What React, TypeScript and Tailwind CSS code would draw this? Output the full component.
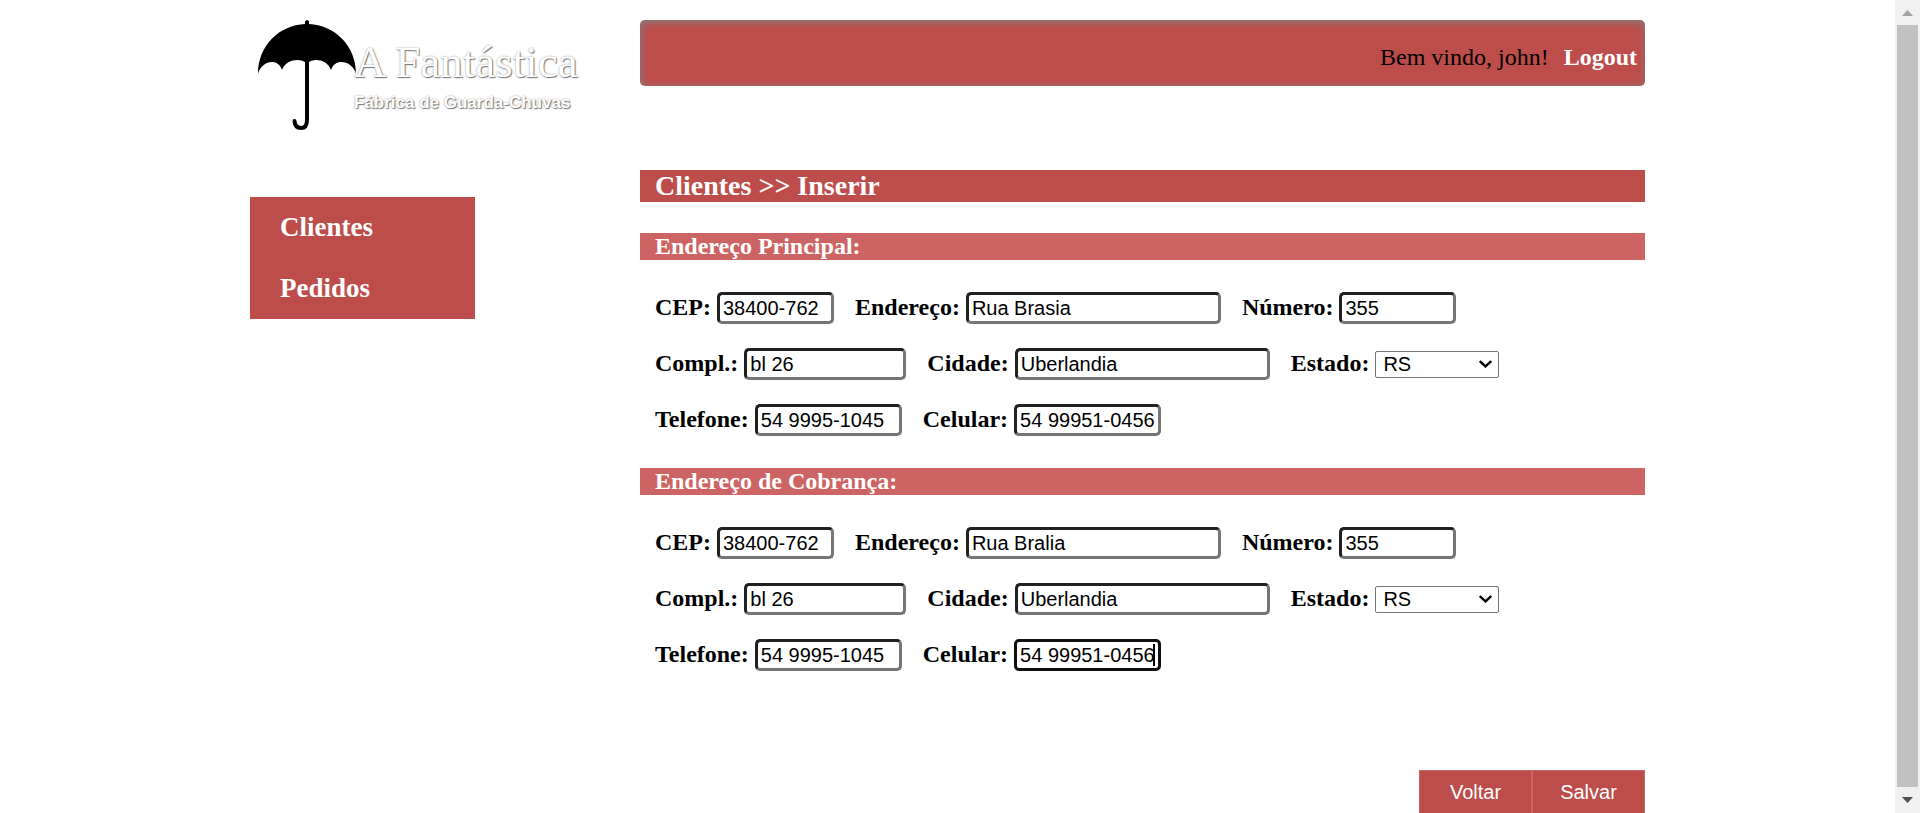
import { useId } from "react";

const control =
  "h-8 rounded-[5px] border-[3px] border-t-[#212121] border-l-[#212121] border-r-[#767676] border-b-[#767676] bg-white px-[3px] font-['Liberation_Sans',Arial,sans-serif] text-[20px] font-normal text-black outline-none";

type FieldProps = { label: string; value: string; width: string; active?: boolean };

function Field({ label, value, width, active }: FieldProps) {
  const id = useId();
  return (
    <div className="flex items-center gap-[6px]">
      <label htmlFor={id} className="leading-[30px] pb-[2px]">
        {label}
      </label>
      <span className="relative flex">
        <input
          id={id}
          type="text"
          defaultValue={value}
          className={`${control} ${width} ${active ? "border-[#101010]!" : ""}`}
        />
        {active && <span className="absolute top-[5px] right-[6px] h-[22px] w-[2px] bg-black" />}
      </span>
    </div>
  );
}

function StateField() {
  const id = useId();
  return (
    <div className="flex items-center gap-[6px]">
      <label htmlFor={id} className="leading-[30px] pb-[2px]">
        Estado:
      </label>
      <span className="relative flex items-center">
        <select
          id={id}
          defaultValue="RS"
          className="h-[27px] w-[124px] appearance-none rounded-[2px] border border-[#767676] bg-white pl-[7px] font-['Liberation_Sans',Arial,sans-serif] text-[20px] leading-[25px] font-normal text-black"
        >
          <option>RS</option>
          <option>MG</option>
          <option>SP</option>
        </select>
        <svg
          className="pointer-events-none absolute right-[7px] h-[8px] w-[13px]"
          viewBox="0 0 13 8"
          fill="none"
          stroke="#000"
          strokeWidth="2.4"
        >
          <path d="M0.8 1 L6.5 6.4 L12.2 1" />
        </svg>
      </span>
    </div>
  );
}

function Address({ title, street, active }: { title: string; street: string; active?: boolean }) {
  return (
    <fieldset className="mb-8">
      <h2 className="bg-[#cc6464] pl-[15px] text-[24px] leading-[27px] font-bold text-white">{title}</h2>
      <div className="mt-8 flex flex-col gap-6 pl-[15px] text-[24px] font-bold">
        <div className="flex gap-[21px]">
          <Field label="CEP:" value="38400-762" width="w-[117px]" />
          <Field label="Endereço:" value={street} width="w-[255px]" />
          <Field label="Número:" value="355" width="w-[117px]" />
        </div>
        <div className="flex gap-[21px]">
          <Field label="Compl.:" value="bl 26" width="w-[162px]" />
          <Field label="Cidade:" value="Uberlandia" width="w-[255px]" />
          <StateField />
        </div>
        <div className="flex gap-[21px]">
          <Field label="Telefone:" value="54 9995-1045" width="w-[147px]" />
          <Field label="Celular:" value="54 99951-0456" width="w-[147px]" active={active} />
        </div>
      </div>
    </fieldset>
  );
}

function Logo() {
  return (
    <a href="#" className="flex h-[118px] items-start pt-[19px] pl-[7px]">
      <svg className="h-[113px] w-[97px] shrink-0" viewBox="0 0 97 113" overflow="visible">
        <path
          d="M1 55 C1 26 23 6 48 5 L48 2.500 Q50 -0.500 52 2.500 L52 5 C77 6 99 26 99 55 C96 42 78 38 74 51 C70 40 56 39 51 44 L49 44 C44 39 29 40 25 51 C21 38 4 42 1 55Z"
          fill="#000"
        />
        <path
          d="M50 42 V101 Q50 109 44 109 Q38 109 37.500 102"
          fill="none"
          stroke="#000"
          strokeWidth="4"
          strokeLinecap="round"
        />
      </svg>
      <span className="flex flex-col whitespace-nowrap text-white [text-shadow:1px_1px_1px_#777,0_0_2px_#999]">
        <span className="pt-[14px] text-[45px] leading-[58px]">A Fantástica</span>
        <span className="font-['Liberation_Sans',Arial,sans-serif] text-[17px] leading-6 font-bold">
          Fábrica de Guarda-Chuvas
        </span>
      </span>
    </a>
  );
}

function Scrollbar() {
  return (
    <div className="flex w-[25px] shrink-0 flex-col items-center bg-[#f1f1f1]" aria-hidden="true">
      <svg className="h-[25px] w-[25px] shrink-0" viewBox="0 0 25 25">
        <path d="M7 16 L12.500 10 L18 16Z" fill="#a3a3a3" />
      </svg>
      <div className="w-[21px] grow bg-[#c1c1c1]" />
      <svg className="h-[26px] w-[25px] shrink-0" viewBox="0 0 25 26">
        <path d="M7 10 L12.500 16 L18 10Z" fill="#505050" />
      </svg>
    </div>
  );
}

const action =
  "h-[45px] w-[113px] border border-[#cc6464] bg-[#bd4d4b] pb-[2px] font-['Liberation_Sans',Arial,sans-serif] text-[20px] text-white";

export default function App() {
  return (
    <div className="flex h-screen overflow-hidden bg-white font-['Liberation_Serif','Times_New_Roman',serif] text-black">
      <div className="flex min-w-0 grow justify-center overflow-hidden">
        <div className="flex w-full max-w-[1395px] items-start gap-[165px]">
          <aside className="w-[225px] shrink-0">
            <Logo />
            <nav className="mt-[79px] flex flex-col bg-[#bd4d4b] pl-[30px] text-[27px] leading-[61px] font-bold text-white">
              <a href="#">Clientes</a>
              <a href="#">Pedidos</a>
            </nav>
          </aside>
          <main className="min-w-0 grow pt-5">
            <header className="flex h-[66px] items-center justify-end gap-[15px] rounded-[5px] bg-[#bd4d4b] pt-[7px] pr-[8px] text-[24px] shadow-[inset_1px_2px_8px_#808080]">
              <span>Bem vindo, john!</span>
              <a href="#" className="font-bold text-white">
                Logout
              </a>
            </header>
            <h1 className="mt-[84px] mb-[31px] bg-[#bd4d4b] pl-[15px] text-[28px] leading-8 font-bold text-white">
              Clientes &gt;&gt; Inserir
            </h1>
            <form>
              <Address title="Endereço Principal:" street="Rua Brasia" />
              <Address title="Endereço de Cobrança:" street="Rua Bralia" active />
              <div className="mt-[99px] flex justify-end">
                <button type="button" className={action}>
                  Voltar
                </button>
                <button type="button" className={action}>
                  Salvar
                </button>
              </div>
            </form>
          </main>
        </div>
      </div>
      <Scrollbar />
    </div>
  );
}
